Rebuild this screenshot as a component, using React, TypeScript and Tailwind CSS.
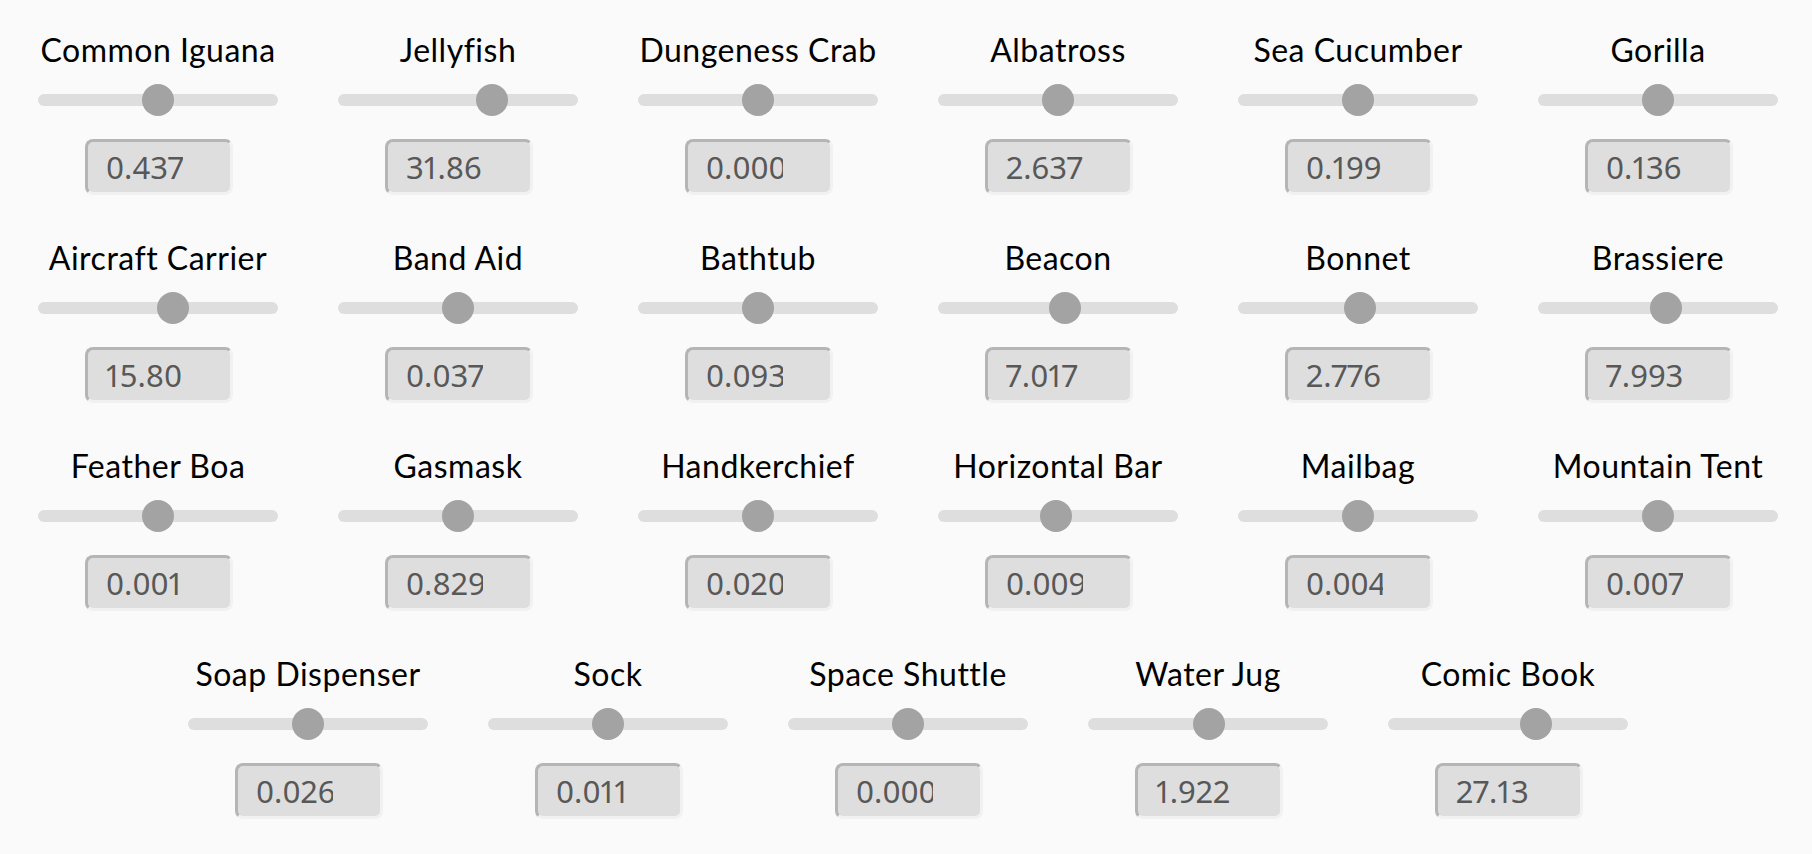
import React from "react";

type Item = { name: string; value: string; f: number };

const items: Item[] = [
  { name: "Common Iguana", value: "0.437", f: 0.5 },
  { name: "Jellyfish", value: "31.86", f: 0.663 },
  { name: "Dungeness Crab", value: "0.000", f: 0.5 },
  { name: "Albatross", value: "2.637", f: 0.5 },
  { name: "Sea Cucumber", value: "0.199", f: 0.5 },
  { name: "Gorilla", value: "0.136", f: 0.5 },
  { name: "Aircraft Carrier", value: "15.80", f: 0.572 },
  { name: "Band Aid", value: "0.037", f: 0.5 },
  { name: "Bathtub", value: "0.093", f: 0.5 },
  { name: "Beacon", value: "7.017", f: 0.534 },
  { name: "Bonnet", value: "2.776", f: 0.51 },
  { name: "Brassiere", value: "7.993", f: 0.538 },
  { name: "Feather Boa", value: "0.001", f: 0.5 },
  { name: "Gasmask", value: "0.829", f: 0.5 },
  { name: "Handkerchief", value: "0.020", f: 0.5 },
  { name: "Horizontal Bar", value: "0.009", f: 0.49 },
  { name: "Mailbag", value: "0.004", f: 0.5 },
  { name: "Mountain Tent", value: "0.007", f: 0.5 },
  { name: "Soap Dispenser", value: "0.026", f: 0.5 },
  { name: "Sock", value: "0.011", f: 0.5 },
  { name: "Space Shuttle", value: "0.000", f: 0.5 },
  { name: "Water Jug", value: "1.922", f: 0.505 },
  { name: "Comic Book", value: "27.13", f: 0.635 },
];

function Cell({ item }: { item: Item }) {
  const left = item.f * 208;
  return (
    <div className="w-[300px] h-[208px] flex flex-col items-center shrink-0">
      <div className="h-[40px] text-[32px] leading-[40px] tracking-[0.5px] text-black whitespace-nowrap [font-family:Lato,'Noto_Sans',sans-serif]">
        {item.name}
      </div>
      <div className="relative w-[240px] h-[32px] mt-[14px] flex items-center">
        <div className="w-full h-[12px] rounded-full bg-[#dedede]" />
        <div
          className="absolute top-0 w-[32px] h-[32px] rounded-full bg-[#a3a3a3]"
          style={{ left: `${left}px` }}
        />
      </div>
      <div className="mt-[23px] ml-[2px] w-[148px] h-[56px] rounded-[8px] bg-[#dedede] border-[3px] border-t-[#b5b5b5] border-l-[#b5b5b5] border-r-[#f1f1f1] border-b-[#f1f1f1] flex items-center pl-[18px]">
        <span className="block w-[77px] overflow-hidden whitespace-nowrap text-[31px] leading-[40px] proportional-nums text-[#585858] [font-family:'Noto_Sans','Open_Sans',sans-serif]">
          {item.value}
        </span>
      </div>
    </div>
  );
}

export default function App() {
  return (
    <div className="w-full h-screen overflow-hidden bg-[#fafafa]">
      <div className="flex flex-wrap justify-center content-start pl-[4px] pt-[30px]">
        {items.map((it) => (
          <Cell key={it.name} item={it} />
        ))}
      </div>
    </div>
  );
}
